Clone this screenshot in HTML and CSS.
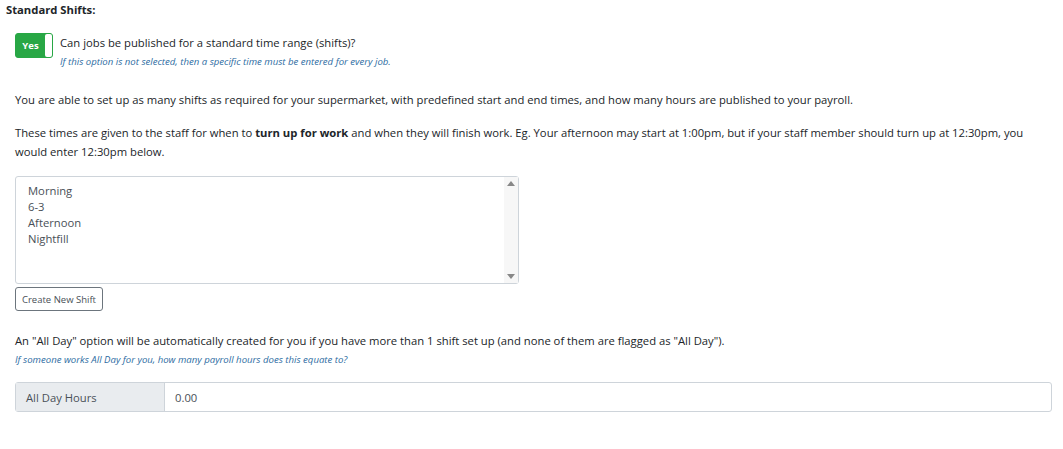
FILE: index.html
```html
<!DOCTYPE html>
<html>
<head>
<meta charset="utf-8">
<link rel="stylesheet" href="styles.css">
</head>
<body>
<div class="page">
  <div class="title">Standard Shifts:</div>
  <div class="content">
    <div class="toggle-row">
      <div class="toggle">
        <span class="toggle-on">Yes</span>
        <span class="toggle-handle"></span>
      </div>
      <div class="toggle-text">
        <div class="question">Can jobs be published for a standard time range (shifts)?</div>
        <div class="help">If this option is not selected, then a specific time must be entered for every job.</div>
      </div>
    </div>

    <p class="para p1">You are able to set up as many shifts as required for your supermarket, with predefined start and end times, and how many hours are published to your payroll.</p>
    <p class="para p2">These times are given to the staff for when to <b class="strong">turn up for work</b> and when they will finish work. Eg. Your afternoon may start at 1:00pm, but if your staff member should turn up at 12:30pm, you would enter 12:30pm below.</p>

    <div class="listbox">
      <ul class="options">
        <li>Morning</li>
        <li>6-3</li>
        <li>Afternoon</li>
        <li>Nightfill</li>
      </ul>
      <div class="scrollbar">
        <span class="arrow up"></span>
        <span class="arrow down"></span>
      </div>
    </div>
    <button class="btn">Create New Shift</button>

    <p class="para p3">An "All Day" option will be automatically created for you if you have more than 1 shift set up (and none of them are flagged as "All Day").</p>
    <div class="help help2">If someone works All Day for you, how many payroll hours does this equate to?</div>

    <div class="input-group">
      <span class="addon">All Day Hours</span>
      <span class="value">0.00</span>
    </div>
  </div>
</div>
</body>
</html>
```

FILE: styles.css
```css
* { box-sizing: border-box; }
html, body { margin: 0; padding: 0; background: #fff; }
body {
  font-family: "Open Sans", "Noto Sans", sans-serif;
  font-size: 11.25px;
  color: #212529;
}
.page { padding: 2px 11px 0 6px; }
.title { font-weight: 700; font-size: 11.25px; line-height: 16px; }
.content { padding-left: 9px; }
.toggle-row { display: flex; margin-top: 15px; align-items: flex-start; }
.toggle {
  width: 38px; height: 25px;
  background: #28a745;
  border: 1px solid #28a745;
  border-radius: 3px;
  display: flex; align-items: stretch;
  flex: none;
}
.toggle-on {
  flex: 1; color: #fff; font-weight: 700; font-size: 9.5px;
  display: flex; align-items: center; justify-content: center;
}
.toggle-handle { width: 7px; background: #fff; border-radius: 2px; }
.toggle-text { margin-left: 7px; }
.question { line-height: 18px; margin-top: 1px; }
.help {
  font-style: italic; font-size: 9.6px; color: #2d6ca2; line-height: 14px;
}
.toggle-text .help { margin-top: 3px; }
.para { margin: 0; line-height: 19px; }
.strong { font-weight: 700; font-size: inherit; line-height: inherit; }
.p1 { margin-top: 21px; }
.p2 { margin-top: 14px; }
.listbox {
  margin-top: 15px;
  width: 504px; height: 108px;
  border: 1px solid #ced4da; border-radius: 3px;
  display: flex;
}
.options { list-style: none; margin: 0; padding: 6px 12px; flex: 1; }
.options li { line-height: 16px; color: #495057; }
.scrollbar {
  width: 14px; position: relative; background: #f7f7f7;
}
.arrow { position: absolute; left: 3px; width: 0; height: 0; border-left: 4px solid transparent; border-right: 4px solid transparent; }
.arrow.up { top: 4px; border-bottom: 5px solid #888; }
.arrow.down { bottom: 4px; border-top: 5px solid #888; }
.btn {
  display: block;
  margin-top: 3px;
  font-family: inherit; font-size: 9.5px; color: #495057;
  background: #fff; border: 1px solid #6c757d; border-radius: 3px;
  padding: 0 6px; height: 24px;
}
.p3 { margin-top: 20px; }
.help2 { margin-top: 3px; }
.input-group {
  margin-top: 15px;
  display: flex; height: 30px;
  border: 1px solid #ced4da; border-radius: 3px;
}
.addon {
  width: 149px; background: #e9ecef; border-right: 1px solid #ced4da;
  display: flex; align-items: center; padding-left: 10px; color: #495057;
}
.value { display: flex; align-items: center; padding-left: 10px; color: #495057; }
```
